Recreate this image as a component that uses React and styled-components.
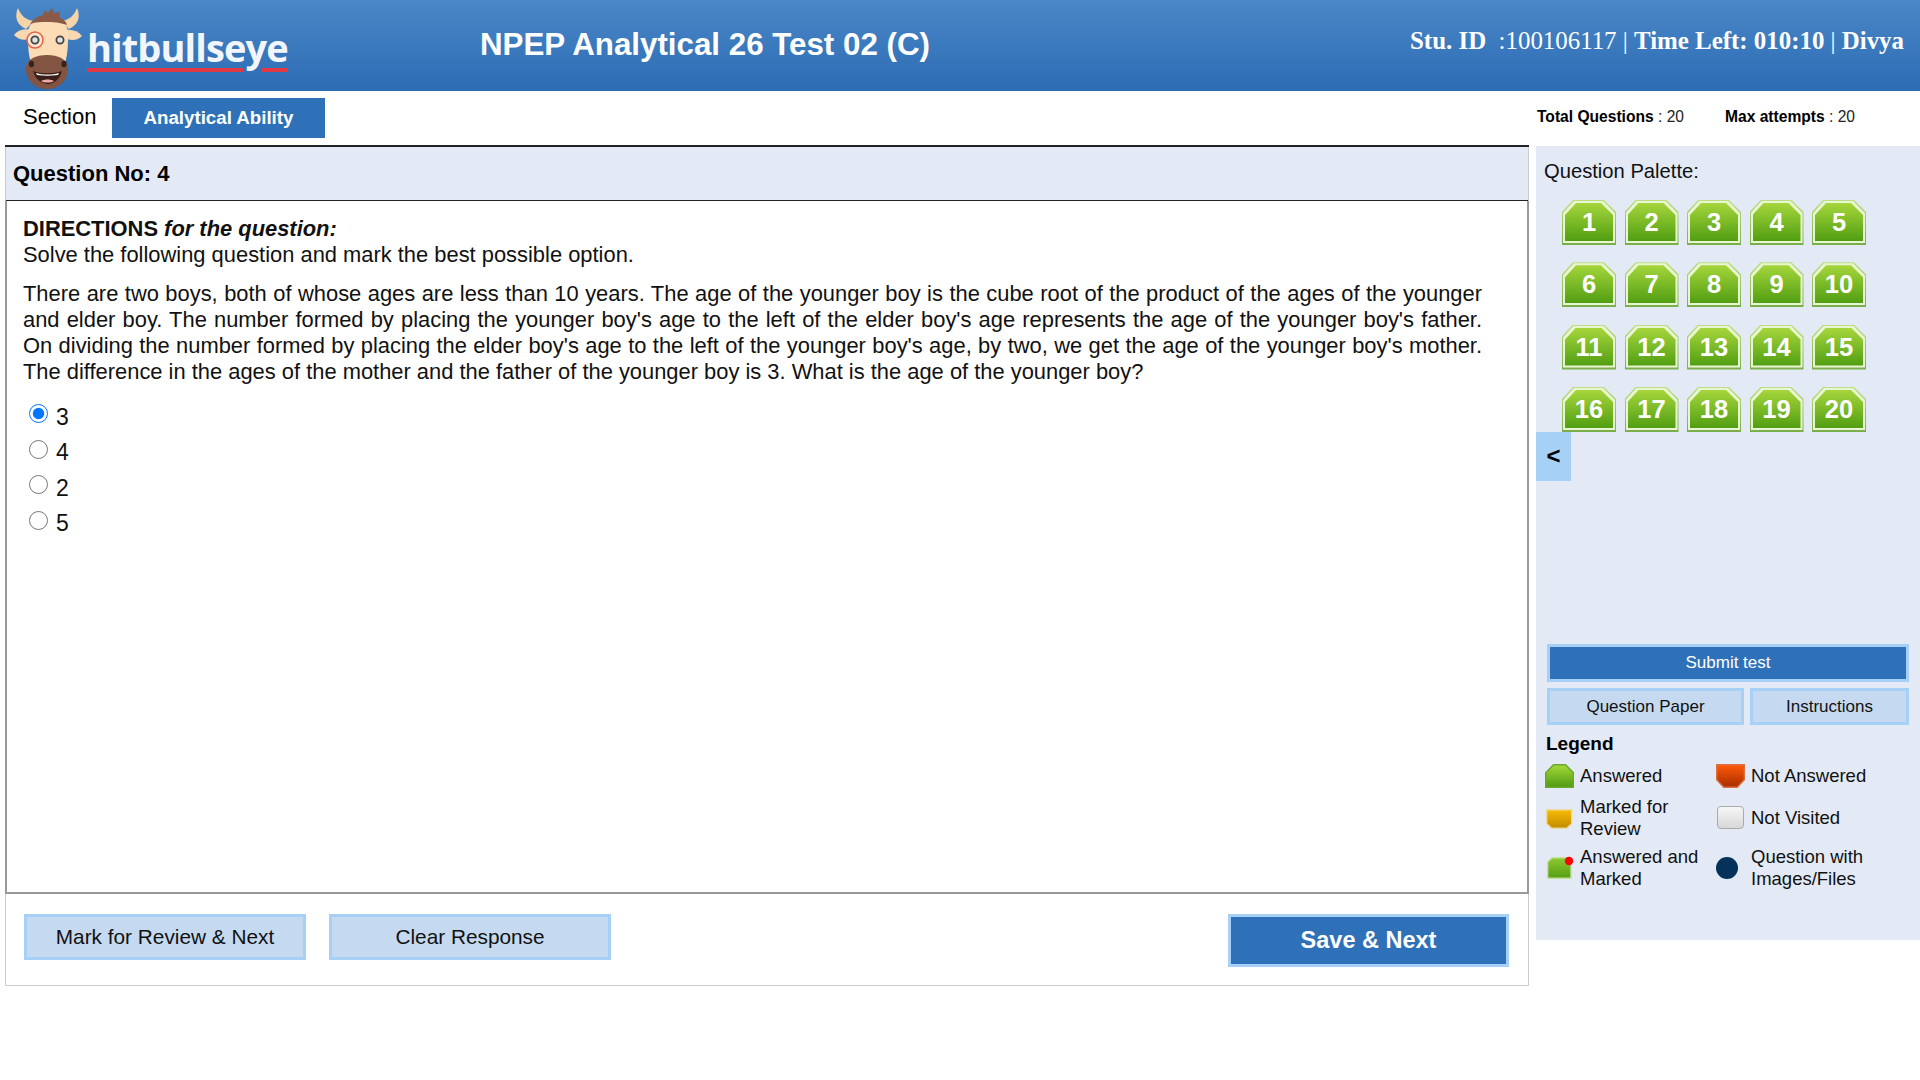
import styled, { createGlobalStyle } from "styled-components"

const GlobalStyle = createGlobalStyle`
  html, body {
    margin: 0;
    padding: 0;
    background: #fff;
    font-family: "Liberation Sans", Arial, sans-serif;
    color: #000;
  }
  * { box-sizing: border-box; }
`

const questions = Array.from({ length: 20 }, (_, i) => i + 1)
const options = [
  { value: "3", checked: true },
  { value: "4" },
  { value: "2" },
  { value: "5" },
]

const BullLogo = () => (
  <svg width="72" height="90" viewBox="0 0 72 90">
    <path d="M6 7c-4 9-1 17 8 21l8-8C14 19 9 15 6 7z" fill="#f6d4a8" />
    <path d="M65 7c4 9 1 17-8 21l-8-8c8-1 13-5 16-13z" fill="#f6d4a8" />
    <path d="M2 34c4-5 10-7 17-5l-2 9C11 40 6 38 2 34z" fill="#f8d8b0" />
    <path d="M70 35c-4-5-10-7-17-6l2 9c6 2 11 1 15-3z" fill="#f8d8b0" />
    <path d="M16 32c0-10 8-14 20-14s20 4 20 14c0 12 0 20-3 30H19c-3-10-3-18-3-30z" fill="#fbdcb4" />
    <path d="M18 23c3-5 8-8 13-9l2-5 3 3 4-5 2 5 6-1-1 5c4 2 7 4 8 8-6-2-11-3-19-3-7 0-13 0-18 2z" fill="#8a5a46" />
    <circle cx="23" cy="39" r="8" fill="#fde7cc" stroke="#e8604c" strokeWidth="1.5" />
    <circle cx="23" cy="39" r="3.6" fill="#dfe3e3" stroke="#444" strokeWidth="1.8" />
    <circle cx="48" cy="39" r="3.6" fill="#dfe3e3" stroke="#444" strokeWidth="1.8" />
    <path d="M14 66c1-8 10-12 21-12s20 4 21 12c1 12-8 22-21 22S13 78 14 66z" fill="#845442" />
    <ellipse cx="19.500" cy="63" rx="2.6" ry="3.2" fill="#33231c" />
    <ellipse cx="52" cy="63" rx="2.6" ry="3.2" fill="#33231c" />
    <path d="M21 70c8 3 20 3 29 0-2 8-8 13-14 13s-13-5-15-13z" fill="#3a1f18" />
    <path d="M24 72c7 2 16 2 23 0l-1 2c-7 1-14 1-21 0z" fill="#fff" />
    <path d="M29 80c4-2 9-2 13 0-3 2-10 2-13 0z" fill="#f0a8a8" />
  </svg>
)

const Shape = ({ kind }) => {
  const paths = {
    answered: { d: "M8.500 .7h12l8 8v14.600H.7V8.700z", from: "#a6d93a", to: "#4f9a12", stroke: "#6aa82c" },
    notAnswered: { d: "M.7 .7h27.600v15l-7 7.600H7.700l-7-7.600z", from: "#ff5a08", to: "#a82c00", stroke: "#dc7040" },
    review: { d: "M1.700 3.700h25v14l-5 4.600H6.700l-5-4.600z", from: "#f8bb06", to: "#c08a00", stroke: "#ecd9a0" },
  }
  const p = paths[kind]
  return (
    <svg width="29" height="24" viewBox="0 0 29 24">
      <defs>
        <linearGradient id={kind} x1="0" y1="0" x2="0" y2="1">
          <stop offset="0" stopColor={p.from} />
          <stop offset="1" stopColor={p.to} />
        </linearGradient>
      </defs>
      <path d={p.d} fill={`url(#${kind})`} stroke={p.stroke} strokeWidth="1.4" />
    </svg>
  )
}

const AnsweredMarked = () => (
  <svg width="29" height="24" viewBox="0 0 29 24">
    <defs>
      <linearGradient id="am" x1="0" y1="0" x2="0" y2="1">
        <stop offset="0" stopColor="#8fc832" />
        <stop offset="1" stopColor="#559e14" />
      </linearGradient>
    </defs>
    <path d="M7 1.700h19v20.600H2.700V6z" fill="url(#am)" stroke="#c2e29a" strokeWidth="1.4" />
    <circle cx="24" cy="5" r="4.200" fill="#f00" />
  </svg>
)

const App = () => (
  <>
    <GlobalStyle />
    <Header>
      <Brand>
        <BullLogo />
        <BrandName>hitbullseye</BrandName>
      </Brand>
      <TestTitle>NPEP Analytical 26 Test 02 (C)</TestTitle>
      <StudentInfo>
        <b>Stu. ID</b>&nbsp; :100106117 | <b>Time Left: 010:10</b> | <b>Divya</b>
      </StudentInfo>
    </Header>
    <Main>
      <LeftColumn>
        <SectionBar>
          <SectionLabel>Section</SectionLabel>
          <SectionTab>Analytical Ability</SectionTab>
        </SectionBar>
        <QuestionPanel>
          <QuestionNo>Question No: 4</QuestionNo>
          <QuestionBody>
            <Directions>
              <b>DIRECTIONS <i>for the question:</i></b>
              <br />
              Solve the following question and mark the best possible option.
            </Directions>
            <QuestionText>
              There are two boys, both of whose ages are less than 10 years. The age of the younger boy is the cube root of the product of the ages of the younger and elder boy. The number formed by placing the younger boy's age to the left of the elder boy's age represents the age of the younger boy's father. On dividing the number formed by placing the elder boy's age to the left of the younger boy's age, by two, we get the age of the younger boy's mother. The difference in the ages of the mother and the father of the younger boy is 3. What is the age of the younger boy?
            </QuestionText>
            <Options>
              {options.map(opt => (
                <OptionRow key={opt.value}>
                  <Radio type="radio" name="answer" defaultChecked={opt.checked} />
                  <span>{opt.value}</span>
                </OptionRow>
              ))}
            </Options>
          </QuestionBody>
          <Actions>
            <ActionGroup>
              <LightButton>Mark for Review &amp; Next</LightButton>
              <LightButton>Clear Response</LightButton>
            </ActionGroup>
            <SaveButton>Save &amp; Next</SaveButton>
          </Actions>
        </QuestionPanel>
      </LeftColumn>
      <RightColumn>
        <Totals>
          <span><b>Total Questions</b> : 20</span>
          <span><b>Max attempts</b> : 20</span>
        </Totals>
        <Sidebar>
          <Collapse>&lt;</Collapse>
          <PaletteTitle>Question Palette:</PaletteTitle>
          <Palette>
            {questions.map(n => (
              <PaletteItem key={n}><span>{n}</span></PaletteItem>
            ))}
          </Palette>
          <SidebarBottom>
            <SubmitButton>Submit test</SubmitButton>
            <SmallButtons>
              <SmallButton $wide>Question Paper</SmallButton>
              <SmallButton>Instructions</SmallButton>
            </SmallButtons>
            <LegendTitle>Legend</LegendTitle>
            <Legend>
              <LegendItem><Shape kind="answered" /><span>Answered</span></LegendItem>
              <LegendItem><Shape kind="notAnswered" /><span>Not Answered</span></LegendItem>
              <LegendItem><Shape kind="review" /><span>Marked for<br />Review</span></LegendItem>
              <LegendItem><NotVisited /><span>Not Visited</span></LegendItem>
              <LegendItem><AnsweredMarked /><span>Answered and<br />Marked</span></LegendItem>
              <LegendItem><MediaDot /><span>Question with<br />Images/Files</span></LegendItem>
            </Legend>
          </SidebarBottom>
        </Sidebar>
      </RightColumn>
    </Main>
  </>
)

const Header = styled.header`
  height: 91px;
  padding: 0 16px 0 12px;
  display: flex;
  align-items: center;
  background: linear-gradient(#4a87c7, #2c6cb4);
  color: #fff;
`
const Brand = styled.div`
  width: 468px;
  display: flex;
  align-items: center;
  gap: 3px;
`
const BrandName = styled.span`
  font-family: "Open Sans", sans-serif;
  font-size: 38px;
  font-weight: 700;
  letter-spacing: -0.9px;
  line-height: 46px;
  margin-top: 4px;
  padding-bottom: 2px;
  color: #f2f6fc;
  background: linear-gradient(90deg, #e13a44 156px, transparent 156px, transparent 175px, #e13a44 175px) left bottom / 100% 4px no-repeat;
`
const TestTitle = styled.div`
  font-size: 31.3px;
  font-weight: 700;
  flex: 1;
  margin-bottom: 2px;
`
const StudentInfo = styled.div`
  font-family: "Liberation Serif", serif;
  font-size: 24.9px;
  margin-bottom: 10px;
`
const Main = styled.main`
  display: flex;
  align-items: flex-start;
`
const LeftColumn = styled.div`
  width: 1529px;
  padding-left: 5px;
`
const SectionBar = styled.div`
  height: 54px;
  display: flex;
  align-items: flex-start;
  padding-top: 7px;
  margin-left: -5px;
`
const SectionLabel = styled.div`
  width: 112px;
  padding: 6px 0 0 23px;
  font-size: 22px;
`
const SectionTab = styled.div`
  width: 213px;
  height: 40px;
  background: #2e71b9;
  color: #fff;
  font-size: 18.7px;
  font-weight: 700;
  display: flex;
  align-items: center;
  justify-content: center;
`
const QuestionPanel = styled.div`
  border-top: 2px solid #222;
`
const QuestionNo = styled.div`
  height: 54px;
  padding-left: 7px;
  display: flex;
  align-items: center;
  background: #e3eaf6;
  border: 1px solid #ccc;
  border-width: 0 1px;
  box-shadow: inset 0 -1px 0 #222;
  font-size: 22px;
  font-weight: 700;
`
const QuestionBody = styled.div`
  height: 693px;
  padding: 15px 45px 0 16px;
  border: 2px solid #999;
  border-top: 0;
  font-size: 21.9px;
  line-height: 26px;
  color: #111;
`
const Directions = styled.div`
  margin-bottom: 13px;
`
const QuestionText = styled.div`
  text-align: justify;
`
const Options = styled.div`
  margin-top: 14px;
  font-size: 23px;
`
const OptionRow = styled.label`
  height: 35.5px;
  display: flex;
  align-items: center;
  gap: 8px;
  padding-left: 6px;
`
const Radio = styled.input`
  width: 19px;
  height: 19px;
  margin: 0 0 6px;
`
const Actions = styled.div`
  height: 92px;
  padding: 20px 19px 0 18px;
  display: flex;
  justify-content: space-between;
  align-items: flex-start;
  border: 1px solid #ccc;
  border-top: 0;
`
const ActionGroup = styled.div`
  display: flex;
  gap: 23px;
`
const LightButton = styled.button`
  width: 282px;
  height: 46px;
  background: #c5daf0;
  border: 3px solid #a6d0f6;
  font: 20.8px "Liberation Sans", sans-serif;
  color: #111;
  padding: 0;
  margin: 0;
`
const SaveButton = styled.button`
  width: 281px;
  height: 53px;
  background: #2e71b9;
  border: 3px solid #a6d0f6;
  color: #fff;
  font: 700 23.5px "Liberation Sans", sans-serif;
  padding: 0;
`
const RightColumn = styled.div`
  flex: 1;
  padding-left: 7px;
`
const Totals = styled.div`
  height: 55px;
  display: flex;
  gap: 41px;
  padding: 17px 0 0 1px;
  font-size: 15.6px;
  color: #222;
  b { color: #000; }
`
const Sidebar = styled.aside`
  position: relative;
  height: 794px;
  background: #e3eaf6;
`
const Collapse = styled.div`
  position: absolute;
  left: 0;
  top: 286px;
  width: 35px;
  height: 49px;
  padding-bottom: 2px;
  background: #a6d0f6;
  display: flex;
  align-items: center;
  justify-content: center;
  font-size: 24px;
  font-weight: 700;
`
const PaletteTitle = styled.div`
  padding: 14px 0 0 8px;
  font-size: 20.2px;
  line-height: 23px;
  color: #111;
`
const Palette = styled.div`
  display: grid;
  grid-template-columns: repeat(5, 54px);
  grid-auto-rows: 45px;
  column-gap: 8.5px;
  row-gap: 17.3px;
  padding: 17px 0 0 26px;
`
const octagon = "polygon(11px 0, calc(100% - 12px) 0, 100% 12px, 100% 100%, 0 100%, 0 12px)"
const PaletteItem = styled.div`
  position: relative;
  isolation: isolate;
  display: flex;
  align-items: center;
  justify-content: center;
  color: #fff;
  font-size: 25.5px;
  font-weight: 700;
  clip-path: ${octagon};
  background: linear-gradient(#bcdf82, #78ae48);
  &::before {
    content: "";
    position: absolute;
    inset: 1px 1px 2px;
    z-index: -2;
    clip-path: ${octagon};
    background: #eaf5d4;
  }
  &::after {
    content: "";
    position: absolute;
    inset: 3px 3px 4px;
    z-index: -1;
    clip-path: ${octagon};
    background: linear-gradient(#a6d63c, #519e12);
  }
`
const SidebarBottom = styled.div`
  position: absolute;
  left: 0;
  right: 0;
  top: 498px;
  padding: 0 11px;
`
const SubmitButton = styled.button`
  display: block;
  width: 362px;
  height: 38px;
  background: #2e71b9;
  border: 3px solid #a6d0f6;
  color: #fff;
  font: 17px "Liberation Sans", sans-serif;
  padding: 0;
`
const SmallButtons = styled.div`
  display: flex;
  gap: 6px;
  margin-top: 6px;
`
const SmallButton = styled.button`
  width: ${p => (p.$wide ? "197px" : "159px")};
  height: 37px;
  background: #c5daf0;
  border: 3px solid #a6d0f6;
  color: #111;
  font: 17px "Liberation Sans", sans-serif;
  padding: 0;
`
const LegendTitle = styled.div`
  margin: 8px 0 0 -1px;
  font-size: 19px;
  line-height: 22px;
  font-weight: 700;
`
const Legend = styled.div`
  display: grid;
  grid-template-columns: 171px 1fr;
  grid-template-rows: 40px 43px 57px;
  margin: 1px 0 0 -2px;
`
const LegendItem = styled.div`
  display: flex;
  align-items: center;
  gap: 6px;
  font-size: 18.5px;
  line-height: 22px;
  color: #111;
`
const NotVisited = styled.div`
  width: 27px;
  height: 23px;
  margin: 0 1px;
  border: 1px solid #aaa;
  border-radius: 4px;
  background: linear-gradient(#f6f6f6, #d8d8d8);
`
const MediaDot = styled.div`
  width: 22px;
  height: 22px;
  margin-right: 7px;
  border-radius: 50%;
  background: #04325a;
`

export default App
